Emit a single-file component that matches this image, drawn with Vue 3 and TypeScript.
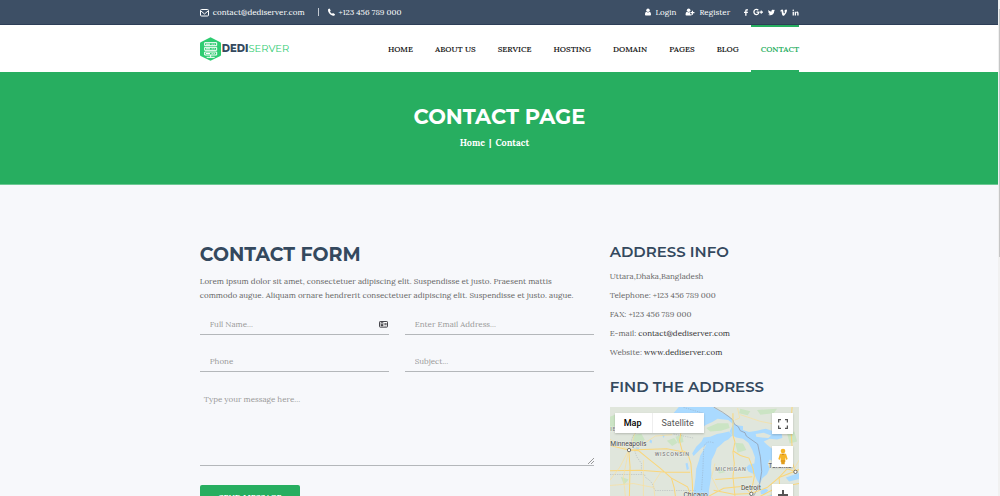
<script setup lang="ts">
import { ref } from 'vue'

interface NavItem {
  label: string
  active?: boolean
}

const navItems: NavItem[] = [
  { label: 'HOME' },
  { label: 'ABOUT US' },
  { label: 'SERVICE' },
  { label: 'HOSTING' },
  { label: 'DOMAIN' },
  { label: 'PAGES' },
  { label: 'BLOG' },
  { label: 'CONTACT', active: true },
]

const fullName = ref('')
const email = ref('')
const phone = ref('')
const subject = ref('')
const message = ref('')
</script>

<template>
  <div class="shell">
    <div class="page">
      <div class="topbar">
        <div class="container topbar-row">
          <div class="top-group">
            <a href="#" class="top-link">
              <svg class="ico" width="9" height="9" viewBox="0 0 18 18" aria-hidden="true">
                <rect x="1" y="3" width="16" height="13" rx="2" fill="none" stroke="currentColor" stroke-width="2" />
                <path d="M2 6l7 6 7-6" fill="none" stroke="currentColor" stroke-width="2" />
              </svg>
              <span>contact@dediserver.com</span>
            </a>
            <span class="divider"></span>
            <a href="#" class="top-link">
              <svg class="ico" width="7" height="8" viewBox="0 0 14 16" aria-hidden="true">
                <path d="M3 1L5.500 5 4 7c1 2 2 3.400 4 4.500L10 10l4 2.500c-.3 2-1.600 3-3.400 3C5 15 0 9 0 4 0 2.300 1.200 1.200 3 1z" fill="currentColor" />
              </svg>
              <span>+123 456 789 000</span>
            </a>
          </div>
          <div class="top-group">
            <a href="#" class="top-link user">
              <svg class="ico" width="6" height="8" viewBox="0 0 14 18" aria-hidden="true">
                <circle cx="7" cy="5" r="4" fill="currentColor" />
                <path d="M0 16c0-5 1-7 3.500-7.500C5 10.500 9 10.500 10.500 8.500 13 9 14 11 14 16q0 1-2 1H2q-2 0-2-1z" fill="currentColor" />
              </svg>
              <span>Login</span>
            </a>
            <a href="#" class="top-link user">
              <svg class="ico" width="10" height="8" viewBox="0 0 20 18" aria-hidden="true">
                <circle cx="7" cy="5" r="4" fill="currentColor" />
                <path d="M0 16c0-5 1-7 3.500-7.500C5 10.500 8 10.500 10 9v5h4v2q0 1-2 1H2q-2 0-2-1z" fill="currentColor" />
                <path d="M15.500 6v9M11 10.500h9" stroke="currentColor" stroke-width="2.600" />
              </svg>
              <span>Register</span>
            </a>
            <div class="social">
              <a href="#" aria-label="Facebook">
                <svg width="4" height="7" viewBox="0 0 10 16"><path d="M3 16V9H0V6h3V4c0-3 1.500-4 4-4h3v3H8C6.500 3 6.300 3.500 6.300 4.500V6H10l-.5 3H6.300v7z" fill="currentColor" /></svg>
              </a>
              <a href="#" aria-label="Google Plus">
                <svg width="10" height="8" viewBox="0 0 20 16">
                  <path d="M10.500 4.500C9 2.800 7 2.200 5 3 2 4.200 1.300 7.500 2.300 10c1.200 3 4.500 4 7 2.500 1.200-.8 2-2.200 2.200-4.200H7" fill="none" stroke="currentColor" stroke-width="2.600" />
                  <path d="M16.500 5v6.500M13.300 8.200H20" stroke="currentColor" stroke-width="2.200" />
                </svg>
              </a>
              <a href="#" aria-label="Twitter">
                <svg width="7" height="7" viewBox="0 0 16 16"><path d="M0 13c2 .2 3.500-.3 4.700-1.300C3 11.500 2 10.700 1.700 9.400h1.400C1.500 8.800.5 7.600.5 6l1.500.4C.5 5.200.2 3.500 1 2c1.800 2.200 4 3.300 7 3.500C7.300 3 9 1.500 11 1.500c1 0 1.800.4 2.400 1l2-.8-1.300 1.900L16 3l-1.700 1.800C14.500 11 9.500 14.500 5 14.500c-2 0-3.500-.5-5-1.500z" fill="currentColor" /></svg>
              </a>
              <a href="#" aria-label="Vimeo">
                <svg width="7" height="7" viewBox="0 0 16 16"><path d="M0 4.500C2 2.500 4 1 5 1c2.500 0 2.500 3.500 3.200 7.500C9 11 9.500 11 11 8c1-2 .5-2.800-1.500-2C10.500 2.500 12 1 14 1c4 .5 1 7-1.500 10.500C10 15 8.500 16 7 15.500 4.500 15 4 8 3.500 5.500 3.200 4.500 2.500 4.800 1 5.800z" fill="currentColor" /></svg>
              </a>
              <a href="#" aria-label="LinkedIn">
                <svg width="7" height="7" viewBox="0 0 14 16"><circle cx="1.800" cy="3" r="1.800" fill="currentColor" /><path d="M.4 6h3v9h-3zM5.200 6H8v1.300C9.500 5 14 5.200 14 9.500V15h-3v-5c0-2.500-2.800-2.300-2.800 0v5h-3z" fill="currentColor" /></svg>
              </a>
            </div>
          </div>
        </div>
      </div>

      <header class="header">
        <div class="container header-row">
          <a href="#" class="logo">
            <svg width="21" height="24" viewBox="0 0 63 72" aria-hidden="true">
              <path d="M31.500 1L61 16q2 1 2 4v33q0 3-2 4L31.500 71 2 57q-2-1-2-4V20q0-3 2-4z" fill="#2ecc71" />
              <path d="M14 17h36v9H14zM14 31h36v9H14zM14 45h36v9H14z" fill="none" stroke="#fff" stroke-width="3" />
              <path d="M18 21.500h12M18 35.500h12M18 49.500h12" stroke="#fff" stroke-width="3" />
              <path d="M35 21.500h12M35 35.500h12M35 49.500h12" stroke="#fff" stroke-width="3" stroke-dasharray="3 3" />
              <path d="M32 54v7M20 61h24" stroke="#fff" stroke-width="3" />
            </svg>
            <span class="logo-text"><b>DEDI</b>SERVER</span>
          </a>
          <nav class="nav" aria-label="Main">
            <a v-for="item in navItems" :key="item.label" href="#" class="nav-link" :class="{ active: item.active }">{{ item.label }}</a>
          </nav>
        </div>
      </header>

      <section class="banner">
        <h1>CONTACT PAGE</h1>
        <p class="crumbs"><a href="#">Home</a><span>|</span><a href="#">Contact</a></p>
      </section>

      <main class="container content">
        <section class="form-col">
          <h2>CONTACT FORM</h2>
          <p class="intro">Lorem ipsum dolor sit amet, consectetuer adipiscing elit. Suspendisse et justo. Praesent mattis<br />commodo augue. Aliquam ornare hendrerit consectetuer adipiscing elit. Suspendisse et justo. augue.</p>
          <form @submit.prevent>
            <div class="fields">
              <div class="field">
                <input v-model="fullName" type="text" placeholder="Full Name..." aria-label="Full name" />
                <svg width="9" height="7" viewBox="0 0 27 21" aria-hidden="true">
                  <rect x="1.500" y="1.500" width="24" height="17" rx="2" fill="#fff" stroke="#46464c" stroke-width="3" />
                  <path d="M5 4h8v12H5zM16 6h7v2h-7zM16 10h7v2h-7zM16 14h7v2h-7z" fill="#46464c" />
                  <circle cx="9" cy="8" r="2" fill="#fff" />
                </svg>
              </div>
              <div class="field"><input v-model="email" type="email" placeholder="Enter Email Address..." aria-label="Email address" /></div>
              <div class="field"><input v-model="phone" type="tel" placeholder="Phone" aria-label="Phone" /></div>
              <div class="field"><input v-model="subject" type="text" placeholder="Subject..." aria-label="Subject" /></div>
            </div>
            <div class="message">
              <textarea v-model="message" placeholder="Type your message here..." aria-label="Message"></textarea>
              <svg class="grip" width="6" height="6" viewBox="0 0 6 6" aria-hidden="true"><path d="M0 6L6 0M3 6l3-3" stroke="#999" stroke-width="1" /></svg>
            </div>
            <button type="submit" class="send">SEND MESSAGE</button>
          </form>
        </section>

        <aside class="info-col">
          <h3>ADDRESS INFO</h3>
          <ul class="info">
            <li>Uttara,Dhaka,Bangladesh</li>
            <li>Telephone: +123 456 789 000</li>
            <li>FAX: +123 456 789 000</li>
            <li>E-mail: <a href="#">contact@dediserver.com</a></li>
            <li>Website: <a href="#">www.dediserver.com</a></li>
          </ul>
          <h3>FIND THE ADDRESS</h3>
          <div class="map">
            <svg class="map-art" viewBox="30 21 567 360" role="img" aria-label="Map of the Great Lakes">
              <rect x="30" y="21" width="567" height="360" fill="#e0e6dc" />
              <g fill="#cbe4c4">
                <path d="M30 50l20-8 14 20-10 26-24 4zM98 105l26-4 10 18-16 14-20-6zM200 122l22-8 10 14-16 10zM226 110l20-6 4 22-16 4zM420 26l30 8-8 12-26-6zM470 30l60-4-10 14-40 4zM560 100l22-6 8 30-22 6zM62 230l24 8-14 16zM352 208l20-4 2 12-18 4z" />
              </g>
              <g fill="#aadaff">
                <path d="M236 21L338 21L362 36L384 48L400 62L398 72L384 60L352 56L336 66L318 74L290 92L250 86L216 70L220 40Z" />
                <path d="M400 70L412 76L428 78L428 90L446 96L470 92L496 86L522 94L544 102L546 114L530 118L508 116L490 124L500 134L520 150L527 172L520 184L508 178L502 192L508 204L500 222L486 234L478 252L470 240L462 222L444 214L438 202L446 194L462 190L464 172L456 150L444 128L428 116L408 112L396 106L388 94Z" />
                <path d="M386 94L396 106L384 118L372 124L362 134L350 144L344 160L334 180L332 204L334 226L330 248L326 270L326 300L312 320L280 320L278 290L282 262L286 232L288 206L296 182L300 166L310 150L318 134L304 144L290 158L280 168L276 160L288 140L304 124L310 112L330 110L350 102L370 98Z" />
                <path d="M480 272L494 264L504 270L494 282L482 282ZM470 256L480 252L480 262ZM490 290L530 278L560 280L540 300L490 310ZM256 190L262 188L266 206L260 210ZM556 232L597 218L597 236L566 244Z" />
                <path d="M150 118l6 4-2 8-6-4zM108 140l10 2-4 8-8-2zM186 104l8 2-4 8z" />
              </g>
              <path d="M466 102L490 98L512 106L504 114L484 112L468 110Z" fill="#e0e6dc" />
              <path d="M318 84L352 70L384 70L388 84L362 92L330 94ZM404 128L428 130L438 150L412 158Z" fill="#cbe4c4" />
              <g fill="none" stroke="#8b91a0" stroke-width="2">
                <path d="M340 21L366 36L386 50L398 60L402 72L414 80L420 92L434 98L438 108L472 132L480 170L484 214L478 250L466 276L452 300" />
                <path d="M30 223h104v8M136 232q20 10 24 30l6 9h120M106 100q-20 20-6 40l10 30 14 20 0 30M340 128q-28-10-30 22l-2 60-4 60" stroke-dasharray="4 3" stroke-width="1" />
                <path d="M250 22l60 18M220 102l60 12" stroke-dasharray="4 3" stroke-width="1" />
              </g>
              <g fill="none" stroke="#fad67a" stroke-width="3">
                <path d="M30 136L86 150L116 152L150 180L180 204L214 234L262 260L278 300M86 150L90 200L88 288M30 212L120 210L200 216L270 216M86 150L200 146L262 158" />
                <path d="M262 158L272 190L276 240L278 290M242 100L238 122L246 152L262 158M214 234L222 262L226 290M398 40L398 106L404 126L398 156L402 190L398 230L404 288" />
                <path d="M398 152L420 166L446 174L458 206L462 228L452 280M322 290L370 264L430 258L452 280L500 262L536 232L597 208M340 270L400 282L452 280M345 238L400 234L456 230" />
                <path d="M540 288L536 232L560 206L585 214M575 21L571 80L575 140L573 180L585 214M480 288L530 262L597 250" />
              </g>
              <g fill="none" stroke="#fbe09a" stroke-width="2">
                <path d="M30 118L86 150L70 230L76 288M104 100L98 122L86 150L60 200L30 240M30 256L100 250L160 262M100 150L166 108L216 104M130 180L130 288M186 210L160 250L164 288M344 190L334 230L354 270M404 60L418 54L412 24M420 44L480 64L520 72L570 94M500 288L560 262M596 180L576 216" />
              </g>
              <g fill="#fff" stroke="#555" stroke-width="2.500">
                <circle cx="87" cy="150" r="5" /><circle cx="585" cy="215" r="5" /><circle cx="453" cy="281" r="5" />
              </g>
              <g class="city">
                <text x="31" y="139">Minneapolis</text>
                <text x="422" y="269">Detroit</text>
                <text x="250" y="291">Chicago</text>
                <text x="504" y="204">Toronto</text>
              </g>
              <g class="state">
                <text x="164" y="169">WISCONSIN</text>
                <text x="345" y="213">MICHIGAN</text>
                <text x="31" y="92">IE</text>
              </g>
            </svg>
            <div class="map-type">
              <button type="button" class="on">Map</button>
              <button type="button">Satellite</button>
            </div>
            <div class="map-tools">
              <button type="button" aria-label="Toggle fullscreen">
                <svg width="10" height="10" viewBox="0 0 20 20"><path d="M1 7V1h5M14 1h5v6M19 13v6h-5M6 19H1v-6" fill="none" stroke="#555" stroke-width="3" /></svg>
              </button>
              <button type="button" aria-label="Street View">
                <svg width="10" height="17" viewBox="0 0 30 51">
                  <circle cx="15" cy="9" r="7" fill="#f5b52a" />
                  <path d="M6 17h18l5 16-4 3-3-8v14H8V28l-3 8-4-3z" fill="#f5b52a" />
                  <path d="M9 36h12l-1 13H10z" fill="#e09b1c" />
                  <path d="M10 17h10l-5 5z" fill="#c9821a" />
                </svg>
              </button>
              <button type="button" class="zoom-in" aria-label="Zoom in">
                <svg width="10" height="10" viewBox="0 0 10 10"><path d="M5 0v10M0 5h10" stroke="#555" stroke-width="2" /></svg>
              </button>
            </div>
          </div>
        </aside>
      </main>
    </div>
    <div class="scroll-track"><div class="scroll-thumb"></div></div>
  </div>
</template>

<style>
body {
  margin: 0;
}
</style>

<style scoped>
* {
  box-sizing: border-box;
}
.shell {
  display: flex;
  height: 100vh;
  overflow: hidden;
  background: #f7f8fb;
  color: #666;
  font: 8px/14px Lora, "Liberation Serif", serif;
}
.page {
  flex: 1;
  min-width: 0;
}
.scroll-track {
  width: 2px;
  margin-left: -1px;
  background: #f1f1f1;
  padding-top: 9px;
}
.scroll-thumb {
  height: 50vh;
  margin-left: 1px;
  background: #c6c6c6;
}
a {
  color: inherit;
  text-decoration: none;
}
h1,
h2,
h3,
p,
ul {
  margin: 0;
  padding: 0;
}
h1,
h2,
h3,
.logo-text {
  font-family: Montserrat, Inter, sans-serif;
}
.container {
  width: 60%;
  margin: 0 auto;
}
.topbar {
  background: #3d4f65;
  border-bottom: 1px solid #2d3e57;
  color: #fff;
}
.topbar-row {
  display: flex;
  justify-content: space-between;
  height: 24px;
}
.top-group,
.top-link,
.social,
.social a {
  display: flex;
  align-items: center;
}
.top-link {
  gap: 4px;
}
.divider {
  width: 1px;
  height: 8px;
  margin: 0 9px 0 13px;
  background: #c3cad2;
}
.user {
  margin-right: 9px;
}
.social {
  gap: 5px;
  margin-left: 5px;
}
.header {
  background: #fff;
}
.header-row {
  display: flex;
  justify-content: space-between;
}
.logo {
  display: flex;
  align-items: center;
  gap: 1px;
}
.logo-text {
  font-size: 10px;
  font-weight: 400;
  color: #2ecc71;
}
.logo-text b {
  font-weight: 800;
  color: #34495e;
}
.nav {
  display: flex;
  gap: 12px;
}
.nav-link {
  padding: 17px 0 16px 10px;
  color: #222;
  font-weight: 600;
  line-height: 14px;
}
.nav-link.active {
  padding: 15px 0 14px 10px;
  border-top: 2px solid #27ae60;
  border-bottom: 2px solid #27ae60;
  color: #27ae60;
}
.banner {
  padding: 32px 0 34px;
  background: #27ae60;
  border-bottom: 1px solid #6dc894;
  color: #fff;
  text-align: center;
}
h1 {
  font-size: 21px;
  line-height: 26px;
  font-weight: 700;
}
.crumbs {
  display: flex;
  justify-content: center;
  gap: 4px;
  margin-top: 6px;
  padding-right: 10px;
  font-size: 9px;
  font-weight: 700;
}
.content {
  display: grid;
  grid-template-columns: 393fr 189fr;
  gap: 16px;
  padding-top: 57px;
}
h2 {
  color: #34495e;
  font-size: 19px;
  line-height: 26px;
  font-weight: 700;
}
.intro {
  margin-top: 6px;
}
.fields {
  display: grid;
  grid-template-columns: 1fr 1fr;
  gap: 16px;
  margin-top: 12px;
}
.field {
  display: flex;
  align-items: center;
  height: 21px;
  padding: 0 1px 0 10px;
  border-bottom: 1px solid #b4b7ba;
}
input,
textarea {
  min-width: 0;
  flex: 1;
  padding: 0;
  border: 0;
  outline: 0;
  background: transparent;
  color: #555;
  font: inherit;
}
input::placeholder,
textarea::placeholder {
  color: #999;
  opacity: 1;
}
.message {
  position: relative;
  display: flex;
  margin-top: 16px;
  border-bottom: 1px solid #b4b7ba;
}
textarea {
  height: 77px;
  padding: 4px;
  resize: none;
}
.grip {
  position: absolute;
  right: 0;
  bottom: 1px;
}
.send {
  margin-top: 19px;
  padding: 5px 19px;
  border: 0;
  border-radius: 2px;
  background: #27ae60;
  color: #fff;
  font: 700 8px/14px Lora, "Liberation Serif", serif;
}
h3 {
  color: #34495e;
  font-size: 15px;
  line-height: 20px;
  font-weight: 600;
}
.info {
  margin: 5px 0 15px;
  list-style: none;
  line-height: 19px;
}
.info a {
  color: #333;
}
.map {
  position: relative;
  margin-top: 10px;
}
.map-art {
  display: block;
  width: 100%;
}
.map-art text {
  paint-order: stroke;
  stroke: #f4f6f2;
  stroke-width: 2px;
  font-family: Roboto, sans-serif;
}
.city text {
  fill: #444;
  font-size: 20px;
}
.state text {
  fill: #808080;
  font-size: 16px;
  font-weight: 500;
  letter-spacing: 2px;
}
.map-type {
  position: absolute;
  top: 6px;
  left: 5px;
  display: flex;
  box-shadow: 0 1px 2px rgba(0, 0, 0, 0.2);
}
.map button {
  border: 0;
  padding: 0;
  background: #fff;
}
.map-type button {
  padding: 0 10px 0 9px;
  color: #565656;
  font: 9px/20px Roboto, sans-serif;
}
.map-type .on {
  border-right: 1px solid #eee;
  color: #000;
  font-weight: 500;
}
.map-tools {
  position: absolute;
  top: 6px;
  right: 6px;
  display: grid;
  gap: 12px;
}
.map-tools button {
  display: grid;
  place-items: center;
  width: 21px;
  height: 21px;
  box-shadow: 0 1px 2px rgba(0, 0, 0, 0.2);
}
.map-tools .zoom-in {
  margin-top: 5px;
}
</style>
